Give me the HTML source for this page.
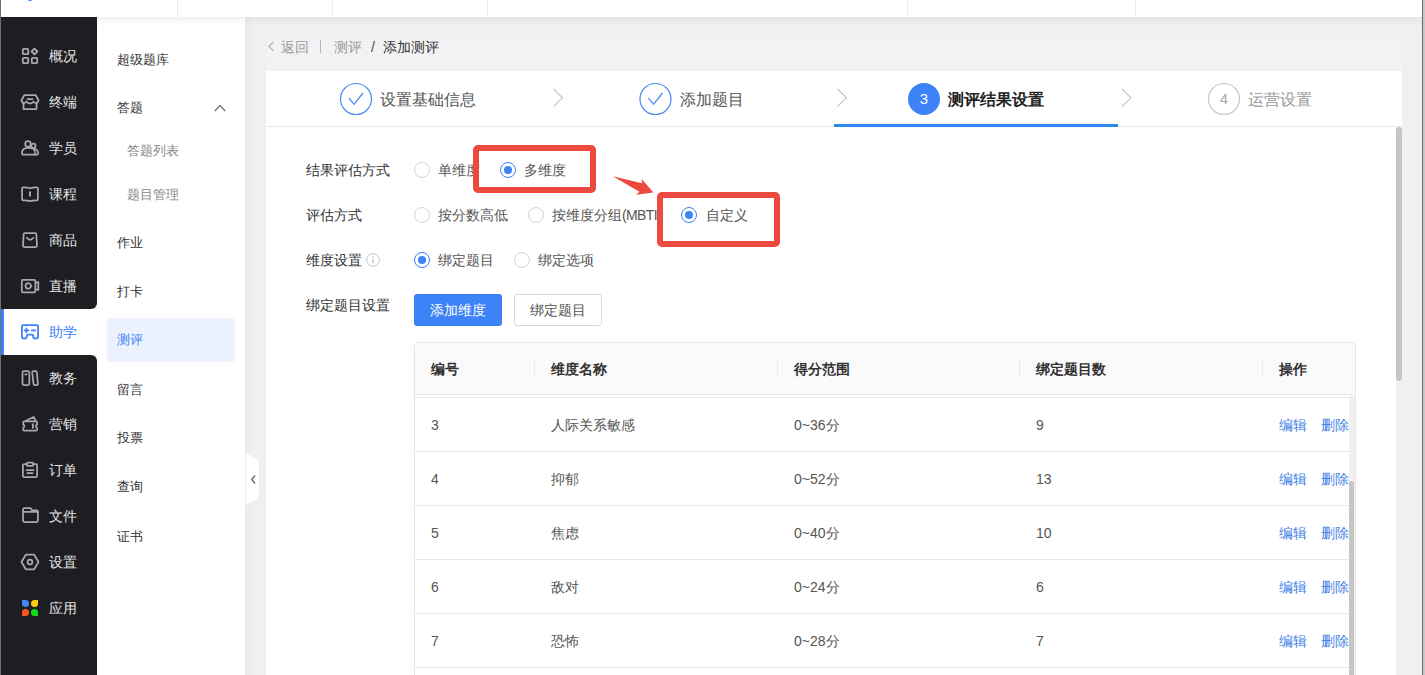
<!DOCTYPE html>
<html><head><meta charset="utf-8">
<style>
*{box-sizing:border-box;margin:0;padding:0}
html,body{width:1425px;height:675px;overflow:hidden;background:#f0f0f3;font-family:"Liberation Sans",sans-serif;position:relative}
.abs{position:absolute}
.t{position:absolute;white-space:nowrap;line-height:20px;height:20px}
#hdr{left:0;top:0;width:1425px;height:17px;background:#fff;z-index:3}
.hdiv{position:absolute;top:0;width:1px;height:17px;background:#ececec}
#lline{left:0;top:0;width:1px;height:675px;background:#6e6e6e;z-index:5}
#side{left:1px;top:17px;width:96px;height:658px;background:#1d1e22}
#sub{left:97px;top:17px;width:148px;height:658px;background:#fff}
.nv{position:absolute;left:49px;font-size:14px;color:#e4e4e4;line-height:20px;white-space:nowrap}
.si{position:absolute;left:117px;font-size:13px;color:#333;line-height:20px;white-space:nowrap}
.si2{position:absolute;left:127px;font-size:13px;color:#888;line-height:20px;white-space:nowrap}
svg.ic{position:absolute;overflow:visible}
</style></head><body>
<div id="hdr" class="abs">
  <div class="abs" style="left:28px;top:-2px;width:4px;height:3px;border-radius:2px;background:#3d82f6"></div>
  <div class="hdiv" style="left:177px"></div>
  <div class="hdiv" style="left:332px"></div>
  <div class="hdiv" style="left:487px"></div>
  <div class="hdiv" style="left:907px"></div>
  <div class="hdiv" style="left:1135px"></div>
</div>
<div id="lline" class="abs"></div>
<!-- left dark sidebar -->
<div class="abs" style="left:1px;top:17px;width:96px;height:292px;background:#1d1e22;border-bottom-right-radius:6px"></div>
<div class="abs" style="left:1px;top:309px;width:96px;height:46px;background:#fff"></div>
<div class="abs" style="left:1px;top:309px;width:3px;height:46px;background:#3d82f6"></div>
<div class="abs" style="left:1px;top:355px;width:96px;height:320px;background:#1d1e22;border-top-right-radius:6px"></div>

<svg class="ic" style="left:0;top:0" width="97" height="675" fill="none" stroke="#a9a9a9" stroke-width="1.75" stroke-linejoin="round" stroke-linecap="round">
  <!-- 概况 -->
  <rect x="22.8" y="48.8" width="5.4" height="5.4" rx="1" stroke-width="1.8"/>
  <rect x="22.8" y="57.8" width="5.4" height="5.4" rx="1" stroke-width="1.8"/>
  <rect x="31.8" y="57.8" width="5.4" height="5.4" rx="1" stroke-width="1.8"/>
  <path d="M34.5 48.6 L37.4 51.5 L34.5 54.4 L31.6 51.5 Z" stroke-width="1.8"/>
  <!-- 终端 store -->
  <path d="M24.5 95 H35.5 L38.5 100 Q38 103 36 103 Q34 103 33.5 101.5 Q32 103.5 30 103.5 Q28 103.5 26.5 101.5 Q26 103 24 103 Q22 103 21.5 100 Z"/>
  <path d="M23.5 103 V109 H36.5 V103"/>
  <path d="M27.5 99 H32.5"/>
  <!-- 学员 -->
  <circle cx="28" cy="144" r="2.8"/>
  <circle cx="33.4" cy="145.7" r="2.1"/>
  <path d="M23 154.6 H37 Q38.1 154.6 38.1 153.5 Q38.1 149.2 33.6 148.7 Q31.5 147.9 28 147.9 Q21.9 147.9 21.9 153.5 Q21.9 154.6 23 154.6 Z"/>
  <path d="M33.6 148.7 Q35.3 151 35.1 154.6"/>
  <!-- 课程 book -->
  <path d="M22.1 188.2 Q22.1 187.3 23 187.3 Q27 187.1 30 188.3 Q33 187.1 37 187.3 Q37.9 187.3 37.9 188.2 V199.4 Q37.9 200.3 37 200.3 Q33 200.1 30 201.1 Q27 200.1 23 200.3 Q22.1 200.3 22.1 199.4 Z"/>
  <path d="M30 191.4 V196.6" stroke-width="1.9" stroke-linecap="butt"/>
  <!-- 商品 bag -->
  <path d="M24.6 233 H35.4 Q36.2 233 36.3 233.8 L37 245.8 Q37 247 35.8 247 H24.2 Q23 247 23 245.8 L23.7 233.8 Q23.8 233 24.6 233 Z"/>
  <path d="M26.9 237.7 Q30.1 241.8 33.2 237.7"/>
  <!-- 直播 camera -->
  <rect x="21.8" y="279.8" width="13.6" height="12.6" rx="1.2"/>
  <path d="M35.5 283 L38.3 282 V290 L35.5 289"/>
  <path d="M28.3 283.2 A2.75 2.75 0 1 0 28.3 288.7 Q29.9 288.7 31.4 286 Q29.9 283.2 28.3 283.2 Z"/>
  <!-- 教务 -->
  <rect x="22.5" y="371.2" width="6.8" height="13.8" rx="1.5"/>
  <path d="M32.2 372.4 Q32.1 371.2 33.3 371.2 H35.6 Q36.7 371.2 36.8 372.3 L37.9 383.9 Q38 385 36.9 385 H34.7 Q33.6 385 33.5 383.9 Z"/>
  <path d="M25.3 374.4 H26.5"/>
  <!-- 营销 ticket -->
  <path d="M24.3 421.3 H36 Q37.1 421.3 37.1 422.4 V424.4 A2 2 0 0 0 37.1 428 V429.6 Q37.1 430.7 36 430.7 H24.3 Q23.2 430.7 23.2 429.6 V428 A2 2 0 0 0 23.2 424.4 V422.4 Q23.2 421.3 24.3 421.3 Z"/>
  <path d="M25.5 421 L33.6 417 L35.8 421"/>
  <path d="M32.9 423.5 V428.5" stroke-width="1.9" stroke-linecap="butt"/>
  <!-- 订单 clipboard -->
  <path d="M26.8 464 H24.3 Q22.9 464 22.9 465.4 V475.7 Q22.9 477.1 24.3 477.1 H35.7 Q37.1 477.1 37.1 475.7 V465.4 Q37.1 464 35.7 464 H33.2"/>
  <rect x="26.8" y="462.6" width="6.4" height="3.3" rx="1"/>
  <path d="M26.4 470 H33.6 M27.3 473.2 H32.7"/>
  <!-- 文件 folder -->
  <path d="M23 520.6 V509.4 Q23 508 24.4 508 H30.5 L32 510.4 H36.5 Q37.9 510.4 37.9 511.8 V520.6 Q37.9 522 36.5 522 H24.4 Q23 522 23 520.6 Z"/>
  <path d="M23 511.9 H37.9"/>
  <!-- 设置 hexagon -->
  <path d="M21.5 562 L25.8 554.7 H34.2 L38.5 562 L34.2 569.3 H25.8 Z"/>
  <circle cx="30" cy="562" r="2.4"/>
</svg>
<!-- 助学 icon blue -->
<svg class="ic" style="left:0;top:0" width="97" height="675" fill="none" stroke="#3d82f6" stroke-width="1.8" stroke-linejoin="round" stroke-linecap="round">
  <path d="M23 325.2 H37.1 Q38.1 325.2 38.1 326.2 V336.4 Q38.1 338.5 36 338.5 Q33.1 338.5 33.1 336.4 V335.8 Q33.1 334.6 31.9 334.6 H28.1 Q26.9 334.6 26.9 335.8 V336.4 Q26.9 338.5 24 338.5 Q21.9 338.5 21.9 336.4 V326.2 Q21.9 325.2 23 325.2 Z"/>
  <path d="M24.5 330.4 H28.3 M26.4 328.5 V332.3 M31.9 330.4 H35.2"/>
</svg>
<!-- 应用 colorful -->
<div class="abs" style="left:22px;top:600px;width:7px;height:7px;background:#3f86f7;border-radius:0.5px 3.5px 3.5px 3.5px"></div>
<div class="abs" style="left:31px;top:600px;width:7px;height:7px;background:#fccb12;border-radius:3.5px 0.5px 3.5px 3.5px"></div>
<div class="abs" style="left:22px;top:609px;width:7px;height:7px;background:#fc5524;border-radius:3.5px 3.5px 3.5px 0.5px"></div>
<div class="abs" style="left:31px;top:609px;width:7px;height:7px;background:#14dc14;border-radius:3.5px 3.5px 0.5px 3.5px"></div>

<div class="nv" style="top:46px">概况</div>
<div class="nv" style="top:92px">终端</div>
<div class="nv" style="top:138px">学员</div>
<div class="nv" style="top:184px">课程</div>
<div class="nv" style="top:230px">商品</div>
<div class="nv" style="top:276px">直播</div>
<div class="nv" style="top:322px;color:#3d82f6">助学</div>
<div class="nv" style="top:368px">教务</div>
<div class="nv" style="top:414px">营销</div>
<div class="nv" style="top:460px">订单</div>
<div class="nv" style="top:506px">文件</div>
<div class="nv" style="top:552px">设置</div>
<div class="nv" style="top:598px">应用</div>

<!-- sub sidebar -->
<div id="sub" class="abs"></div>
<div class="si" style="top:50px">超级题库</div>
<div class="si" style="top:98px">答题</div>
<svg class="ic" style="left:214px;top:104px" width="12" height="8" fill="none" stroke="#666" stroke-width="1.1"><path d="M0.8 7 L6 1.6 L11.2 7"/></svg>
<div class="si2" style="top:141px">答题列表</div>
<div class="si2" style="top:185px">题目管理</div>
<div class="si" style="top:233px">作业</div>
<div class="si" style="top:282px">打卡</div>
<div class="abs" style="left:107px;top:318px;width:128px;height:44px;background:#ebf1fd;border-radius:4px"></div>
<div class="si" style="top:330px;color:#3d82f6">测评</div>
<div class="si" style="top:380px">留言</div>
<div class="si" style="top:428px">投票</div>
<div class="si" style="top:477px">查询</div>
<div class="si" style="top:527px">证书</div>

<!-- main area -->
<div class="abs" style="left:245px;top:17px;width:8px;height:658px;background:linear-gradient(90deg,rgba(0,0,0,0.025),rgba(0,0,0,0))"></div>

<!-- collapse handle -->
<svg class="ic" style="left:246px;top:453px" width="14" height="52"><path d="M0 0 L9 5 Q13 7.5 13 12 V40 Q13 44.5 9 47 L0 52 Z" fill="#fff"/><path d="M9 22.5 L5.8 26.5 L9 30.5" fill="none" stroke="#707070" stroke-width="1.5"/></svg>
<!-- breadcrumb -->
<div class="abs" style="left:266px;top:36px;width:1136px;height:35px;background:#f2f2f4;border-radius:4px 4px 0 0"></div>
<svg class="ic" style="left:268px;top:41px" width="7" height="11" fill="none" stroke="#aaa" stroke-width="1.1"><path d="M5.5 0.8 L1 5.3 L5.5 9.8"/></svg>
<div class="t" style="left:281px;top:37px;font-size:14px;color:#999">返回</div>
<div class="abs" style="left:320px;top:40px;width:1px;height:13px;background:#b5b5b5"></div>
<div class="t" style="left:334px;top:37px;font-size:14px;color:#999">测评</div>
<div class="t" style="left:371px;top:37px;font-size:14px;color:#444">/</div>
<div class="t" style="left:383px;top:37px;font-size:14px;color:#333">添加测评</div>
<!-- card -->
<div class="abs" style="left:266px;top:71px;width:1136px;height:604px;background:#fff"></div>
<div class="abs" style="left:266px;top:126px;width:1136px;height:1px;background:#e8e8e8"></div>
<!-- card scrollbar -->
<div class="abs" style="left:1396px;top:127px;width:6px;height:548px;background:#f1f1f1"></div>
<div class="abs" style="left:1396px;top:127px;width:6px;height:254px;background:#c6c6c6;border-radius:3px"></div>
<!-- right edge -->
<div class="abs" style="left:1422px;top:0;width:1px;height:675px;background:#6a6a6a;z-index:6"></div><div class="abs" style="left:1423px;top:0;width:2px;height:675px;background:#c8c8c8;z-index:6"></div>
<!-- steps -->
<svg class="ic" style="left:0;top:0" width="1425" height="140" fill="none">
  <circle cx="356" cy="99" r="15.5" stroke="#4a8af4" stroke-width="1.2"/>
  <path d="M349 98.2 L354 104.3 L363 93" stroke="#4a8af4" stroke-width="1.3"/>
  <circle cx="655.5" cy="99" r="15.5" stroke="#4a8af4" stroke-width="1.2"/>
  <path d="M648.5 98.2 L653.5 104.3 L662.5 93" stroke="#4a8af4" stroke-width="1.3"/>
  <circle cx="924" cy="99" r="16" fill="#3d82f6"/>
  <circle cx="1224" cy="99" r="15.5" stroke="#c8c8c8" stroke-width="1.2"/>
  <path d="M553.5 89 L562.5 97.8 L553.5 106.5" stroke="#c4c4c4" stroke-width="1.1"/>
  <path d="M837.5 89 L846.5 97.8 L837.5 106.5" stroke="#c4c4c4" stroke-width="1.1"/>
  <path d="M1122 89 L1131 97.8 L1122 106.5" stroke="#c4c4c4" stroke-width="1.1"/>
</svg>
<div class="t" style="left:380px;top:90px;font-size:16px;color:#555">设置基础信息</div>
<div class="t" style="left:680px;top:90px;font-size:16px;color:#555">添加题目</div>
<div class="t" style="left:918px;top:89px;font-size:15px;color:#fff;width:12px;text-align:center">3</div>
<div class="t" style="left:948px;top:90px;font-size:16px;color:#222;font-weight:bold">测评结果设置</div>
<div class="t" style="left:1218px;top:89px;font-size:15px;color:#aaa;width:12px;text-align:center">4</div>
<div class="t" style="left:1248px;top:90px;font-size:16px;color:#999">运营设置</div>
<div class="abs" style="left:834px;top:124px;width:284px;height:3px;background:#2a8af0"></div>

<!-- form -->
<div class="t" style="left:306px;top:160px;font-size:14px;color:#333">结果评估方式</div>
<div class="t" style="left:306px;top:205px;font-size:14px;color:#333">评估方式</div>
<div class="t" style="left:306px;top:250px;font-size:14px;color:#333">维度设置</div>
<svg class="ic" style="left:366px;top:253px" width="14" height="14" fill="none"><circle cx="7" cy="7" r="6.3" stroke="#c8c8c8" stroke-width="1"/><path d="M7 6 V10.5" stroke="#bbb" stroke-width="1.2"/><circle cx="7" cy="4" r="0.8" fill="#bbb"/></svg>
<div class="t" style="left:306px;top:295px;font-size:14px;color:#333">绑定题目设置</div>
<svg class="ic" style="left:0;top:0" width="800" height="300" fill="none">
  <circle cx="422" cy="170" r="7.5" stroke="#d4d4d4" stroke-width="1"/>
  <circle cx="508" cy="170" r="7.5" stroke="#3d82f6" stroke-width="1"/><circle cx="508" cy="170" r="4" fill="#3d82f6"/>
  <circle cx="422" cy="215" r="7.5" stroke="#d4d4d4" stroke-width="1"/>
  <circle cx="536" cy="215" r="7.5" stroke="#d4d4d4" stroke-width="1"/>
  <circle cx="689" cy="215" r="7.5" stroke="#3d82f6" stroke-width="1"/><circle cx="689" cy="215" r="4" fill="#3d82f6"/>
  <circle cx="422" cy="260" r="7.5" stroke="#3d82f6" stroke-width="1"/><circle cx="422" cy="260" r="4" fill="#3d82f6"/>
  <circle cx="522" cy="260" r="7.5" stroke="#d4d4d4" stroke-width="1"/>
</svg>
<div class="t" style="left:438px;top:160px;font-size:14px;color:#555">单维度</div>
<div class="t" style="left:524px;top:160px;font-size:14px;color:#555">多维度</div>
<div class="t" style="left:438px;top:205px;font-size:14px;color:#555">按分数高低</div>
<div class="t" style="left:552px;top:205px;font-size:14px;color:#555;width:105px;overflow:hidden">按维度分组<span style="letter-spacing:-0.6px">(MBTI)</span></div>
<div class="t" style="left:706px;top:205px;font-size:14px;color:#555">自定义</div>
<div class="t" style="left:438px;top:250px;font-size:14px;color:#555">绑定题目</div>
<div class="t" style="left:538px;top:250px;font-size:14px;color:#555">绑定选项</div>
<div class="abs" style="left:414px;top:294px;width:88px;height:32px;background:#3d82f6;border-radius:3px;color:#fff;font-size:14px;line-height:32px;text-align:center">添加维度</div>
<div class="abs" style="left:514px;top:294px;width:88px;height:32px;background:#fff;border:1px solid #d9d9d9;border-radius:3px;color:#555;font-size:14px;line-height:30px;text-align:center">绑定题目</div>

<!-- table -->
<div class="abs" style="left:414px;top:342px;width:942px;height:340px;border:1px solid #e6e6e6;border-radius:4px 4px 0 0;background:#fff;overflow:hidden">
  <div class="abs" style="left:0;top:0;width:940px;height:52px;background:#fafafa;border-bottom:1px solid #e8e8e8"></div>
  <div class="abs" style="left:0;top:54px;width:934px;height:1px;background:#ebebeb"></div>
  <div class="abs" style="left:934px;top:53px;width:6px;height:300px;background:#f0f0f0"></div>
  <div class="abs" style="left:934px;top:138px;width:5px;height:300px;background:#c6c6c6;border-radius:2.5px 2.5px 0 0"></div>
</div>
<div class="abs" style="left:534px;top:359px;width:1px;height:19px;background:#e9e9e9"></div>
<div class="abs" style="left:777px;top:359px;width:1px;height:19px;background:#e9e9e9"></div>
<div class="abs" style="left:1019px;top:359px;width:1px;height:19px;background:#e9e9e9"></div>
<div class="abs" style="left:1262px;top:359px;width:1px;height:19px;background:#e9e9e9"></div>
<div class="t" style="left:431px;top:359px;font-size:14px;color:#333;font-weight:bold">编号</div>
<div class="t" style="left:551px;top:359px;font-size:14px;color:#333;font-weight:bold">维度名称</div>
<div class="t" style="left:794px;top:359px;font-size:14px;color:#333;font-weight:bold">得分范围</div>
<div class="t" style="left:1036px;top:359px;font-size:14px;color:#333;font-weight:bold">绑定题目数</div>
<div class="t" style="left:1279px;top:359px;font-size:14px;color:#333;font-weight:bold">操作</div>
<div class="t" style="left:431px;top:415px;font-size:14px;color:#555">3</div>
<div class="t" style="left:551px;top:415px;font-size:14px;color:#555">人际关系敏感</div>
<div class="t" style="left:794px;top:415px;font-size:14px;color:#555">0~36分</div>
<div class="t" style="left:1036px;top:415px;font-size:14px;color:#555">9</div>
<div class="t" style="left:1279px;top:415px;font-size:14px;color:#3f7fe8">编辑</div>
<div class="t" style="left:1321px;top:415px;font-size:14px;color:#3f7fe8;width:28px;overflow:hidden">删除</div>
<div class="abs" style="left:415px;top:451px;width:934px;height:1px;background:#e8e8e8"></div>
<div class="t" style="left:431px;top:469px;font-size:14px;color:#555">4</div>
<div class="t" style="left:551px;top:469px;font-size:14px;color:#555">抑郁</div>
<div class="t" style="left:794px;top:469px;font-size:14px;color:#555">0~52分</div>
<div class="t" style="left:1036px;top:469px;font-size:14px;color:#555">13</div>
<div class="t" style="left:1279px;top:469px;font-size:14px;color:#3f7fe8">编辑</div>
<div class="t" style="left:1321px;top:469px;font-size:14px;color:#3f7fe8;width:28px;overflow:hidden">删除</div>
<div class="abs" style="left:415px;top:505px;width:934px;height:1px;background:#e8e8e8"></div>
<div class="t" style="left:431px;top:523px;font-size:14px;color:#555">5</div>
<div class="t" style="left:551px;top:523px;font-size:14px;color:#555">焦虑</div>
<div class="t" style="left:794px;top:523px;font-size:14px;color:#555">0~40分</div>
<div class="t" style="left:1036px;top:523px;font-size:14px;color:#555">10</div>
<div class="t" style="left:1279px;top:523px;font-size:14px;color:#3f7fe8">编辑</div>
<div class="t" style="left:1321px;top:523px;font-size:14px;color:#3f7fe8;width:28px;overflow:hidden">删除</div>
<div class="abs" style="left:415px;top:559px;width:934px;height:1px;background:#e8e8e8"></div>
<div class="t" style="left:431px;top:577px;font-size:14px;color:#555">6</div>
<div class="t" style="left:551px;top:577px;font-size:14px;color:#555">敌对</div>
<div class="t" style="left:794px;top:577px;font-size:14px;color:#555">0~24分</div>
<div class="t" style="left:1036px;top:577px;font-size:14px;color:#555">6</div>
<div class="t" style="left:1279px;top:577px;font-size:14px;color:#3f7fe8">编辑</div>
<div class="t" style="left:1321px;top:577px;font-size:14px;color:#3f7fe8;width:28px;overflow:hidden">删除</div>
<div class="abs" style="left:415px;top:613px;width:934px;height:1px;background:#e8e8e8"></div>
<div class="t" style="left:431px;top:631px;font-size:14px;color:#555">7</div>
<div class="t" style="left:551px;top:631px;font-size:14px;color:#555">恐怖</div>
<div class="t" style="left:794px;top:631px;font-size:14px;color:#555">0~28分</div>
<div class="t" style="left:1036px;top:631px;font-size:14px;color:#555">7</div>
<div class="t" style="left:1279px;top:631px;font-size:14px;color:#3f7fe8">编辑</div>
<div class="t" style="left:1321px;top:631px;font-size:14px;color:#3f7fe8;width:28px;overflow:hidden">删除</div>
<div class="abs" style="left:415px;top:667px;width:934px;height:1px;background:#e8e8e8"></div>
<div class="abs" style="left:97px;top:17px;width:1325px;height:10px;background:linear-gradient(180deg,rgba(0,0,0,0.05),rgba(0,0,0,0.015) 50%,rgba(0,0,0,0))"></div>
<!-- red annotations -->
<div class="abs" style="left:473px;top:145px;width:123px;height:48px;border:6px solid #ec4a3e;border-radius:5px"></div>
<div class="abs" style="left:657px;top:192px;width:123px;height:55px;border:6px solid #ec4a3e;border-radius:5px"></div>
<svg class="ic" style="left:0;top:0" width="800" height="300"><path d="M612.8 176.2 L641.9 183.3 L641.7 179.1 L653.4 192.4 L636.1 194.7 L639.4 191.8 Z" fill="#ec4a3e"/></svg>
</body></html>
